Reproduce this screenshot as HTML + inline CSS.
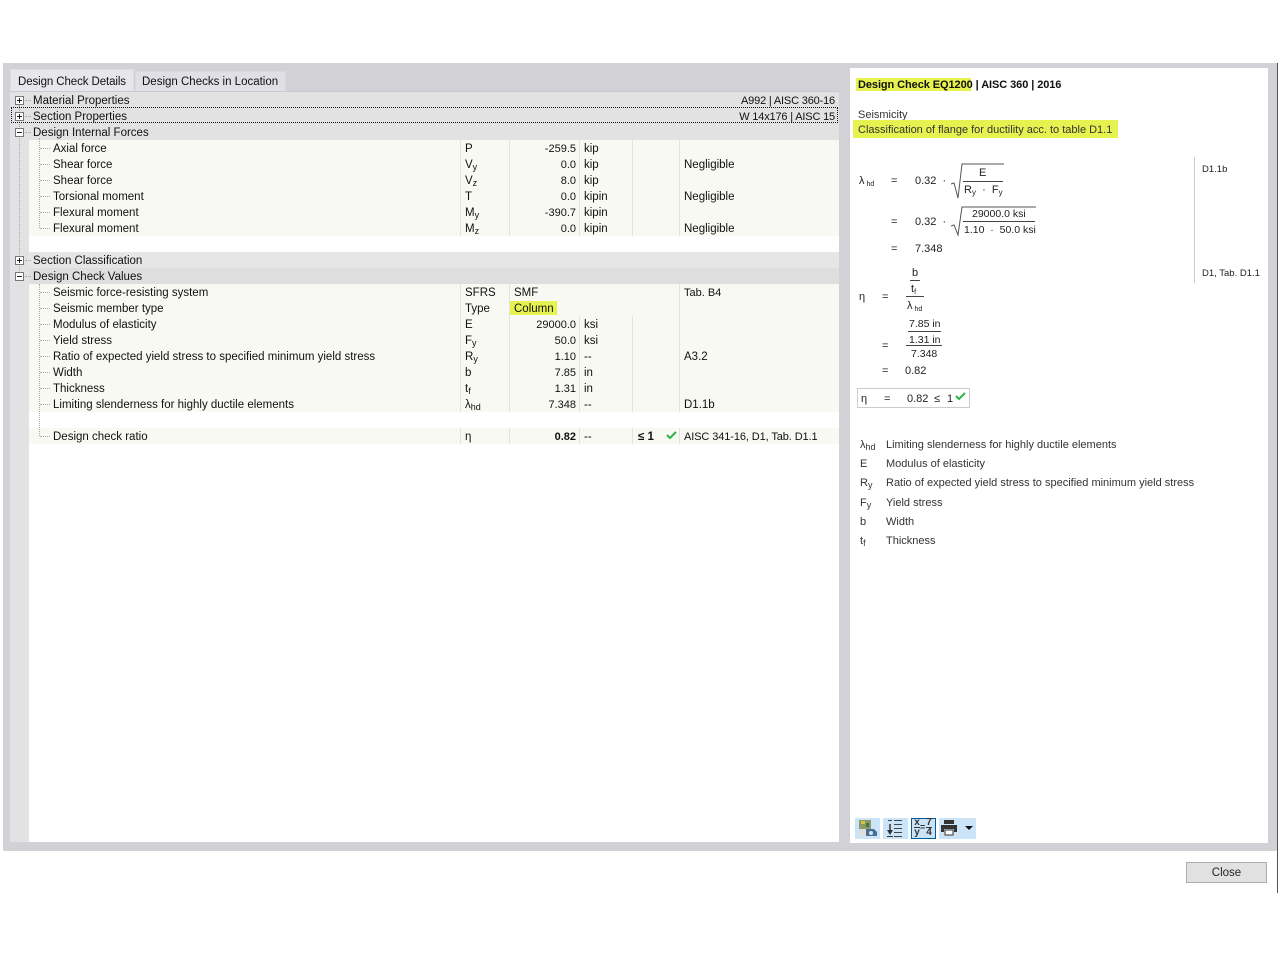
<!DOCTYPE html>
<html><head><meta charset="utf-8"><title>Design Check</title>
<style>
html,body{margin:0;padding:0;background:#fff;}
body{width:1280px;height:960px;position:relative;overflow:hidden;font-family:"Liberation Sans",sans-serif;font-size:11.5px;color:#111;}
div,span{position:absolute;white-space:nowrap;}
sub{font-size:9px;vertical-align:-2px;line-height:0;}
.r{left:29px;width:810px;height:16px;line-height:16px;background:#f8f9f3;}
.h{left:29px;width:810px;height:16px;line-height:16px;background:#e2e2e2;}
.r span,.h span{top:1px;line-height:16px;}
.n{left:24px;}
.s{left:436px;}
.v{left:450px;width:97px;text-align:right;font-size:11px;}
.u{left:555px;}
.x{left:655px;font-size:11.5px;}
.t{left:4px;}
.e{right:4px;font-size:11px;letter-spacing:-.17px;}
.c{width:1px;background:#e4e4df;}
.b{width:7px;height:7px;border:1px solid #777;background:#fff;left:15px;}
.b:before{content:"";position:absolute;left:1px;top:3px;width:5px;height:1px;background:#222;}
.p:after{content:"";position:absolute;left:3px;top:1px;width:1px;height:5px;background:#222;}
.dv{border-left:1px dotted #aaa;width:0;}
.dh{border-top:1px dotted #aaa;height:0;}
.m{font-size:11px;color:#222;}
.fr{height:1px;background:#444;}
.l{font-size:11px;color:#333;line-height:15px;}
</style></head><body>
<div style="left:3px;top:63px;width:1274px;height:788px;background:#d1d1d6"></div>
<div style="left:1277px;top:63px;width:1px;height:830px;background:#555"></div>

<!-- tabs -->
<div style="left:10px;top:69px;width:124px;height:23px;background:#e7e7eb;border:1px solid #dcdce0;border-bottom:0;box-sizing:border-box;line-height:25px;padding-left:7px;letter-spacing:-.1px">Design Check Details</div>
<div style="left:135px;top:71px;width:151px;height:21px;background:#dfdfe5;border:1px solid #d9d9dd;border-bottom:0;box-sizing:border-box;line-height:21px;padding-left:6px">Design Checks in Location</div>

<!-- main panel -->
<div style="left:10px;top:91px;width:829px;height:751px;background:#fff;border-top:1px solid #c9c9d0;box-sizing:border-box"></div>
<div style="left:10px;top:92px;width:19px;height:750px;background:#e2e2e2"></div>

<div class="h" style="top:92px"><span class="t">Material Properties</span><span class="e">A992 | AISC 360-16</span></div>
<div class="h" style="top:108px"><span class="t">Section Properties</span><span class="e">W 14x176 | AISC 15</span></div>
<div class="h" style="top:124px"><span class="t">Design Internal Forces</span></div>

<div class="r" style="top:140px"><span class="n">Axial force</span><span class="s">P</span><span class="v">-259.5</span><span class="u">kip</span></div>
<div class="r" style="top:156px"><span class="n">Shear force</span><span class="s">V<sub>y</sub></span><span class="v">0.0</span><span class="u">kip</span><span class="x">Negligible</span></div>
<div class="r" style="top:172px"><span class="n">Shear force</span><span class="s">V<sub>z</sub></span><span class="v">8.0</span><span class="u">kip</span></div>
<div class="r" style="top:188px"><span class="n">Torsional moment</span><span class="s">T</span><span class="v">0.0</span><span class="u">kipin</span><span class="x">Negligible</span></div>
<div class="r" style="top:204px"><span class="n">Flexural moment</span><span class="s">M<sub>y</sub></span><span class="v">-390.7</span><span class="u">kipin</span></div>
<div class="r" style="top:220px"><span class="n">Flexural moment</span><span class="s">M<sub>z</sub></span><span class="v">0.0</span><span class="u">kipin</span><span class="x">Negligible</span></div>

<div class="h" style="top:252px;background:#e6e6e6"><span class="t">Section Classification</span></div>
<div class="h" style="top:268px;background:#dedede"><span class="t">Design Check Values</span></div>

<div class="r" style="top:284px"><span class="n">Seismic force-resisting system</span><span class="s">SFRS</span><span style="left:485px">SMF</span><span class="x" style="font-size:11px">Tab. B4</span></div>
<div class="r" style="top:300px"><span class="n">Seismic member type</span><span class="s">Type</span><span style="left:480px;top:1px;width:48px;height:14px;background:#e6f24f"></span><span style="left:485px">Column</span></div>
<div class="r" style="top:316px"><span class="n">Modulus of elasticity</span><span class="s">E</span><span class="v">29000.0</span><span class="u">ksi</span></div>
<div class="r" style="top:332px"><span class="n">Yield stress</span><span class="s">F<sub>y</sub></span><span class="v">50.0</span><span class="u">ksi</span></div>
<div class="r" style="top:348px"><span class="n">Ratio of expected yield stress to specified minimum yield stress</span><span class="s">R<sub>y</sub></span><span class="v">1.10</span><span class="u">--</span><span class="x">A3.2</span></div>
<div class="r" style="top:364px"><span class="n">Width</span><span class="s">b</span><span class="v">7.85</span><span class="u">in</span></div>
<div class="r" style="top:380px"><span class="n">Thickness</span><span class="s">t<sub>f</sub></span><span class="v">1.31</span><span class="u">in</span></div>
<div class="r" style="top:396px"><span class="n">Limiting slenderness for highly ductile elements</span><span class="s">λ<sub>hd</sub></span><span class="v">7.348</span><span class="u">--</span><span class="x">D1.1b</span></div>
<div class="r" style="top:428px"><span class="n">Design check ratio</span><span class="s">η</span><span class="v"><b>0.82</b></span><span class="u">--</span><span style="left:609px"><b>≤ 1</b></span><span class="x" style="font-size:11px;letter-spacing:-.1px">AISC 341-16, D1, Tab. D1.1</span></div>

<!-- column lines -->
<div class="c" style="left:460px;top:140px;height:96px"></div>
<div class="c" style="left:509px;top:140px;height:96px"></div>
<div class="c" style="left:579px;top:140px;height:96px"></div>
<div class="c" style="left:632px;top:140px;height:96px"></div>
<div class="c" style="left:679px;top:140px;height:96px"></div>
<div class="c" style="left:460px;top:284px;height:128px"></div>
<div class="c" style="left:509px;top:284px;height:128px"></div>
<div class="c" style="left:579px;top:316px;height:96px"></div>
<div class="c" style="left:632px;top:316px;height:96px"></div>
<div class="c" style="left:679px;top:284px;height:128px"></div>
<div class="c" style="left:460px;top:428px;height:16px"></div>
<div class="c" style="left:509px;top:428px;height:16px"></div>
<div class="c" style="left:579px;top:428px;height:16px"></div>
<div class="c" style="left:632px;top:428px;height:16px"></div>
<div class="c" style="left:679px;top:428px;height:16px"></div>

<!-- tree lines -->
<div class="dv" style="left:19px;top:105px;height:170px"></div>
<div class="dv" style="left:39px;top:138px;height:90px"></div>
<div class="dv" style="left:39px;top:284px;height:152px"></div>
<div class="dh" style="left:25px;top:100px;width:6px"></div>
<div class="dh" style="left:25px;top:116px;width:6px"></div>
<div class="dh" style="left:25px;top:132px;width:6px"></div>
<div class="dh" style="left:25px;top:260px;width:6px"></div>
<div class="dh" style="left:25px;top:276px;width:6px"></div>
<div class="dh" style="left:40px;top:148px;width:10px"></div>
<div class="dh" style="left:40px;top:164px;width:10px"></div>
<div class="dh" style="left:40px;top:180px;width:10px"></div>
<div class="dh" style="left:40px;top:196px;width:10px"></div>
<div class="dh" style="left:40px;top:212px;width:10px"></div>
<div class="dh" style="left:40px;top:228px;width:10px"></div>
<div class="dh" style="left:40px;top:292px;width:10px"></div>
<div class="dh" style="left:40px;top:308px;width:10px"></div>
<div class="dh" style="left:40px;top:324px;width:10px"></div>
<div class="dh" style="left:40px;top:340px;width:10px"></div>
<div class="dh" style="left:40px;top:356px;width:10px"></div>
<div class="dh" style="left:40px;top:372px;width:10px"></div>
<div class="dh" style="left:40px;top:388px;width:10px"></div>
<div class="dh" style="left:40px;top:404px;width:10px"></div>
<div class="dh" style="left:40px;top:436px;width:10px"></div>

<div class="b p" style="top:96px"></div>
<div class="b p" style="top:112px"></div>
<div class="b" style="top:128px"></div>
<div class="b p" style="top:256px"></div>
<div class="b" style="top:272px"></div>

<!-- focus rect -->
<div style="left:11px;top:107px;width:825px;height:14px;border:1px dotted #111"></div>

<svg style="position:absolute;left:665px;top:431px" width="13" height="10" viewBox="0 0 13 10"><path d="M2 4l3 3 6-6" fill="none" stroke="#2fb344" stroke-width="2"/></svg>

<!-- right panel -->
<div style="left:850px;top:68px;width:418px;height:775px;background:#fff"></div>
<div style="left:856px;top:78px;width:115px;height:13px;background:#e6f24f"></div>
<div style="left:858px;top:78px;line-height:15px;font-weight:bold;font-size:11px;letter-spacing:-.08px">Design Check EQ1200 | AISC 360 | 2016</div>
<div class="l" style="left:858px;top:108px">Seismicity</div>
<div style="left:853px;top:120px;width:265px;height:18px;background:#e6f24f"></div>
<div class="l" style="left:858px;top:123px">Classification of flange for ductility acc. to table D1.1</div>

<div style="left:1194px;top:157px;width:1px;height:126px;background:#ccc"></div>
<div class="m" style="left:1202px;top:164px;font-size:9.5px">D1.1b</div>
<div class="m" style="left:1202px;top:268px;font-size:9.5px">D1, Tab. D1.1</div>

<!-- formula 1 -->
<div class="m" style="left:859px;top:175px">λ<sub style="font-size:7px"> hd</sub></div>
<div class="m" style="left:891px;top:175px">=</div>
<div class="m" style="left:915px;top:175px">0.32 &nbsp;·</div>
<svg style="position:absolute;left:950px;top:163px" width="90" height="75" viewBox="0 0 90 75"><path d="M1 21l3 -1 4 15 4 -34h42" fill="none" stroke="#555"/><path d="M1 63l3-1 4 10 4-28h74" fill="none" stroke="#555"/></svg>
<div class="m" style="left:979px;top:167px">E</div>
<div class="fr" style="left:963px;top:181px;width:40px"></div>
<div class="m" style="left:964px;top:184px">R<sub style="font-size:8px">y</sub> &nbsp;· &nbsp;F<sub style="font-size:8px">y</sub></div>

<div class="m" style="left:891px;top:216px">=</div>
<div class="m" style="left:915px;top:216px">0.32 &nbsp;·</div>
<div class="m" style="left:972px;top:208px;font-size:10.5px">29000.0 ksi</div>
<div class="fr" style="left:963px;top:221px;width:72px"></div>
<div class="m" style="left:964px;top:224px;font-size:10.5px">1.10 &nbsp;· &nbsp;50.0 ksi</div>
<div class="m" style="left:891px;top:243px">=</div>
<div class="m" style="left:915px;top:243px">7.348</div>

<!-- formula 2 -->
<div class="m" style="left:859px;top:291px">η</div>
<div class="m" style="left:882px;top:291px">=</div>
<div class="m" style="left:912px;top:267px">b</div>
<div class="fr" style="left:910px;top:280px;width:10px"></div>
<div class="m" style="left:911px;top:283px">t<sub style="font-size:7px">f</sub></div>
<div class="fr" style="left:906px;top:296px;width:18px"></div>
<div class="m" style="left:907px;top:300px">λ<sub style="font-size:7px"> hd</sub></div>
<div class="m" style="left:909px;top:318px;font-size:10.5px">7.85 in</div>
<div class="fr" style="left:908px;top:331px;width:33px"></div>
<div class="m" style="left:909px;top:334px;font-size:10.5px">1.31 in</div>
<div class="fr" style="left:906px;top:345px;width:36px"></div>
<div class="m" style="left:911px;top:348px;font-size:10.5px">7.348</div>
<div class="m" style="left:882px;top:340px">=</div>
<div class="m" style="left:882px;top:365px">=</div>
<div class="m" style="left:905px;top:365px">0.82</div>

<!-- result box -->
<div style="left:857px;top:388px;width:111px;height:18px;border:1px solid #ccc"></div>
<div class="m" style="left:861px;top:393px">η</div>
<div class="m" style="left:884px;top:393px">=</div>
<div class="m" style="left:907px;top:393px">0.82</div>
<div class="m" style="left:934px;top:393px">≤</div>
<div class="m" style="left:947px;top:393px">1</div>
<svg style="position:absolute;left:955px;top:392px" width="11" height="9" viewBox="0 0 11 9"><path d="M1 4l3 3 6-6" fill="none" stroke="#2fb344" stroke-width="2"/></svg>

<!-- legend -->
<div class="l" style="left:860px;top:438px">λ<sub>hd</sub></div><div class="l" style="left:886px;top:438px">Limiting slenderness for highly ductile elements</div>
<div class="l" style="left:860px;top:457px">E</div><div class="l" style="left:886px;top:457px">Modulus of elasticity</div>
<div class="l" style="left:860px;top:476px">R<sub>y</sub></div><div class="l" style="left:886px;top:476px">Ratio of expected yield stress to specified minimum yield stress</div>
<div class="l" style="left:860px;top:496px">F<sub>y</sub></div><div class="l" style="left:886px;top:496px">Yield stress</div>
<div class="l" style="left:860px;top:515px">b</div><div class="l" style="left:886px;top:515px">Width</div>
<div class="l" style="left:860px;top:534px">t<sub>f</sub></div><div class="l" style="left:886px;top:534px">Thickness</div>

<!-- toolbar -->
<div style="left:855px;top:818px;width:25px;height:21px;background:#cce4f7"></div>
<svg style="position:absolute;left:858px;top:819px" width="20" height="19" viewBox="0 0 20 19"><rect x="1" y="1" width="12" height="9" fill="#8a9a6a"/><rect x="3" y="2" width="4" height="3" fill="#d8c040"/><rect x="8" y="4" width="3" height="4" fill="#3a7a3a"/><rect x="1" y="10" width="8" height="7" fill="#ddd"/><path d="M8 10h8l3 3v4H8z" fill="#4a6d94"/><circle cx="13" cy="14" r="2" fill="#cce4f7"/></svg>
<div style="left:883px;top:818px;width:25px;height:21px;background:#cce4f7"></div>
<svg style="position:absolute;left:886px;top:819px" width="20" height="19" viewBox="0 0 20 19"><path d="M8 1.5h8M8 5.5h8M8 9.5h8M8 13.5h8M8 17.5h8M2 1.5h4" stroke="#444" fill="none"/><path d="M4 5v7" stroke="#333" stroke-width="1.5"/><path d="M1 11h6l-3 5z" fill="#333"/><path d="M1 17.5h6" stroke="#333"/></svg>
<div style="left:911px;top:818px;width:25px;height:21px;background:#cce4f7;border:1px solid #005a9e;box-sizing:border-box"></div>
<div style="left:914px;top:818px;font-size:10px;font-weight:bold;color:#333;line-height:10px;text-align:center;width:6px">x</div>
<div style="left:914px;top:828px;font-size:10px;font-weight:bold;color:#333;line-height:10px;text-align:center;width:6px">y</div>
<div style="left:914px;top:827px;width:6px;height:1px;background:#333"></div>
<div style="left:920px;top:822px;font-size:9px;font-weight:bold;color:#333">=</div>
<div style="left:926px;top:818px;font-size:10px;font-weight:bold;color:#333;line-height:10px;text-align:center;width:6px">7</div>
<div style="left:926px;top:828px;font-size:10px;font-weight:bold;color:#333;line-height:10px;text-align:center;width:6px">4</div>
<div style="left:926px;top:827px;width:6px;height:1px;background:#333"></div>
<div style="left:939px;top:818px;width:37px;height:21px;background:#cce4f7"></div>
<svg style="position:absolute;left:940px;top:819px" width="34" height="18" viewBox="0 0 34 18"><path d="M4 1h10v4H4z" fill="#333"/><path d="M1 6h16v7h-3v-3H4v3H1z" fill="#333"/><path d="M5 11h8v5H5z" fill="#fff" stroke="#333"/><path d="M25 7h8l-4 4z" fill="#111"/></svg>

<!-- close -->
<div style="left:1186px;top:862px;width:81px;height:21px;background:#e1e1e1;border:1px solid #adadad;box-sizing:border-box;text-align:center;line-height:21px;color:#222">Close</div>
</body></html>
